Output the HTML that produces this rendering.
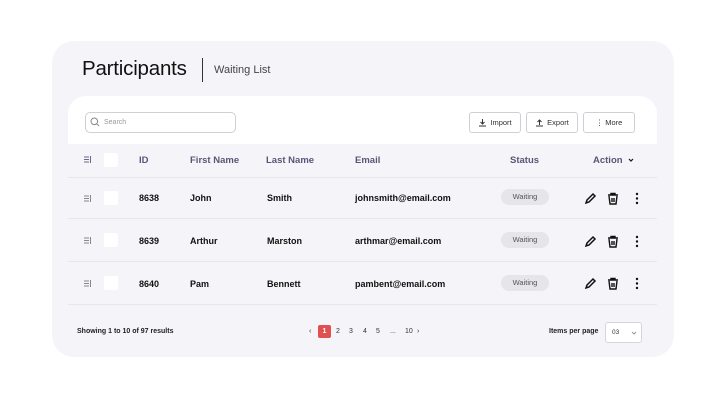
<!DOCTYPE html>
<html><head><meta charset="utf-8"><style>
*{box-sizing:border-box;margin:0;padding:0}
body{width:726px;height:400px;background:#fff;font-family:"Liberation Sans",sans-serif;position:relative;overflow:hidden;color:#111}
.card{position:absolute;left:52px;top:41px;width:622px;height:316px;background:#f5f5f9;border-radius:22px}
.abs{position:absolute}
h1{position:absolute;left:82px;top:57px;font-size:20.5px;font-weight:400;color:#111;letter-spacing:-0.2px}
.sep{position:absolute;left:202px;top:58px;width:1px;height:24px;background:#333}
.sub{position:absolute;left:214px;top:64px;font-size:11px;color:#444}
.panel{position:absolute;left:68px;top:96px;width:589px;height:48px;background:#fff;border-radius:18px 18px 0 0}
.search{position:absolute;left:85px;top:112px;width:151px;height:21px;border:1px solid #cfcfd6;border-radius:5px;background:#fff;font-size:7px;color:#999;padding:6px 0 0 18px}
.btn{position:absolute;top:112px;height:21px;border:1px solid #cfcfd6;border-radius:3px;background:#fff;font-size:7.5px;color:#333;display:flex;align-items:center;justify-content:center;gap:3px}
.hd{position:absolute;top:155px;font-size:9.5px;color:#5a5578;font-weight:bold}
.line{position:absolute;left:68px;width:589px;height:1px;background:#e6e6ec}
.cell{position:absolute;font-size:9px;font-weight:bold;color:#111}
.chk{position:absolute;left:104px;width:14px;height:14px;background:#fff;border-radius:2px}
.pill{position:absolute;left:501px;width:48px;height:16px;border-radius:8px;background:#e6e6ea;font-size:7.5px;color:#555;text-align:center;line-height:16px}
.foot{position:absolute;top:328px;font-size:7px;color:#222;font-weight:bold}
.pg{position:absolute;top:328px;font-size:7px;color:#333}
</style></head><body>
<div class="card"></div>
<h1>Participants</h1><div class="sep"></div><div class="sub">Waiting List</div>
<div class="panel"></div>
<div class="search">Search</div>
<svg class="abs" style="left:90px;top:117px" width="10" height="10" viewBox="0 0 10 10"><circle cx="4.3" cy="4.3" r="3.3" fill="none" stroke="#888" stroke-width="1"/><path d="M6.7 6.7L9 9" stroke="#888"/></svg>
<div class="btn" style="left:469px;width:52px"><svg width="9" height="9" viewBox="0 0 9 9"><path d="M4.5 1v5M2.5 4l2 2 2-2M1 8h7" stroke="#333" fill="none"/></svg>Import</div>
<div class="btn" style="left:526px;width:52px"><svg width="9" height="9" viewBox="0 0 9 9"><path d="M4.5 7V2M2.5 4l2-2 2 2M1 8h7" stroke="#333" fill="none"/></svg>Export</div>
<div class="btn" style="left:583px;width:52px">⋮ More</div>
<svg class="abs" style="left:84px;top:156px" width="8" height="7"><path d="M0 1h5M0 3.5h5M0 6h5M6.5 0v7" stroke="#6a6688" stroke-width="1"/></svg>
<div class="chk" style="top:153px"></div>
<div class="hd" style="left:139px">ID</div>
<div class="hd" style="left:190px">First Name</div>
<div class="hd" style="left:266px">Last Name</div>
<div class="hd" style="left:355px">Email</div>
<div class="hd" style="left:510px">Status</div>
<div class="hd" style="left:593px">Action</div>
<svg class="abs" style="left:628px;top:157px" width="6" height="6"><path d="M1 2l2 2 2-2" stroke="#111" fill="none" stroke-width="1.2"/></svg>
<div class="line" style="top:177px"></div>
<div class="line" style="top:218px"></div>
<div class="line" style="top:261px"></div>
<div class="line" style="top:304px"></div>

<svg class="abs" style="left:84px;top:195px" width="8" height="7"><path d="M0 1h5M0 3.5h5M0 6h5M6.5 0v7" stroke="#888" stroke-width="1"/></svg>
<div class="chk" style="top:191px"></div>
<div class="cell" style="left:139px;top:193px">8638</div><div class="cell" style="left:190px;top:193px">John</div><div class="cell" style="left:267px;top:193px">Smith</div><div class="cell" style="left:355px;top:193px">johnsmith@email.com</div>
<div class="pill" style="top:189px">Waiting</div>

<svg class="abs" style="left:84px;top:237px" width="8" height="7"><path d="M0 1h5M0 3.5h5M0 6h5M6.5 0v7" stroke="#888" stroke-width="1"/></svg>
<div class="chk" style="top:233px"></div>
<div class="cell" style="left:139px;top:236px">8639</div><div class="cell" style="left:190px;top:236px">Arthur</div><div class="cell" style="left:267px;top:236px">Marston</div><div class="cell" style="left:355px;top:236px">arthmar@email.com</div>
<div class="pill" style="top:232px">Waiting</div>

<svg class="abs" style="left:84px;top:280px" width="8" height="7"><path d="M0 1h5M0 3.5h5M0 6h5M6.5 0v7" stroke="#888" stroke-width="1"/></svg>
<div class="chk" style="top:276px"></div>
<div class="cell" style="left:139px;top:279px">8640</div><div class="cell" style="left:190px;top:279px">Pam</div><div class="cell" style="left:267px;top:279px">Bennett</div><div class="cell" style="left:355px;top:279px">pambent@email.com</div>
<div class="pill" style="top:275px">Waiting</div>

<svg class="abs" style="left:584px;top:192px" width="60" height="104" viewBox="0 0 60 104">
<g id="a">
<path d="M2 11l1-3 6-6 2 2-6 6z" fill="none" stroke="#111" stroke-width="1.5"/>
<path d="M24 3h10M27 3V1.5h4V3M25 4l1 8h6l1-8M28 6v4M30 6v4" fill="none" stroke="#111" stroke-width="1.4"/>
<circle cx="53" cy="2" r="1.2" fill="#111"/><circle cx="53" cy="6.5" r="1.2" fill="#111"/><circle cx="53" cy="11" r="1.2" fill="#111"/>
</g>
<use href="#a" y="43"/><use href="#a" y="85"/>
</svg>

<div class="foot" style="left:77px">Showing 1 to 10 of 97 results</div>
<div class="pg" style="left:309px">‹</div>
<div class="abs" style="left:318px;top:325px;width:13px;height:13px;background:#e05050;border-radius:2px;color:#fff;font-size:7px;text-align:center;line-height:13px;font-weight:bold">1</div>
<div class="pg" style="left:336px">2</div><div class="pg" style="left:349px">3</div><div class="pg" style="left:363px">4</div><div class="pg" style="left:376px">5</div><div class="pg" style="left:390px">...</div><div class="pg" style="left:405px">10</div><div class="pg" style="left:417px">›</div>
<div class="foot" style="left:549px">Items per page</div>
<div class="abs" style="left:605px;top:322px;width:37px;height:21px;background:#fff;border:1px solid #d5d5dc;border-radius:3px;font-size:6.5px;color:#333;padding:6px 0 0 6px">03<svg style="position:absolute;left:25px;top:8px" width="6" height="5"><path d="M1 1l2 2 2-2" stroke="#999" fill="none"/></svg></div>
</body></html>
